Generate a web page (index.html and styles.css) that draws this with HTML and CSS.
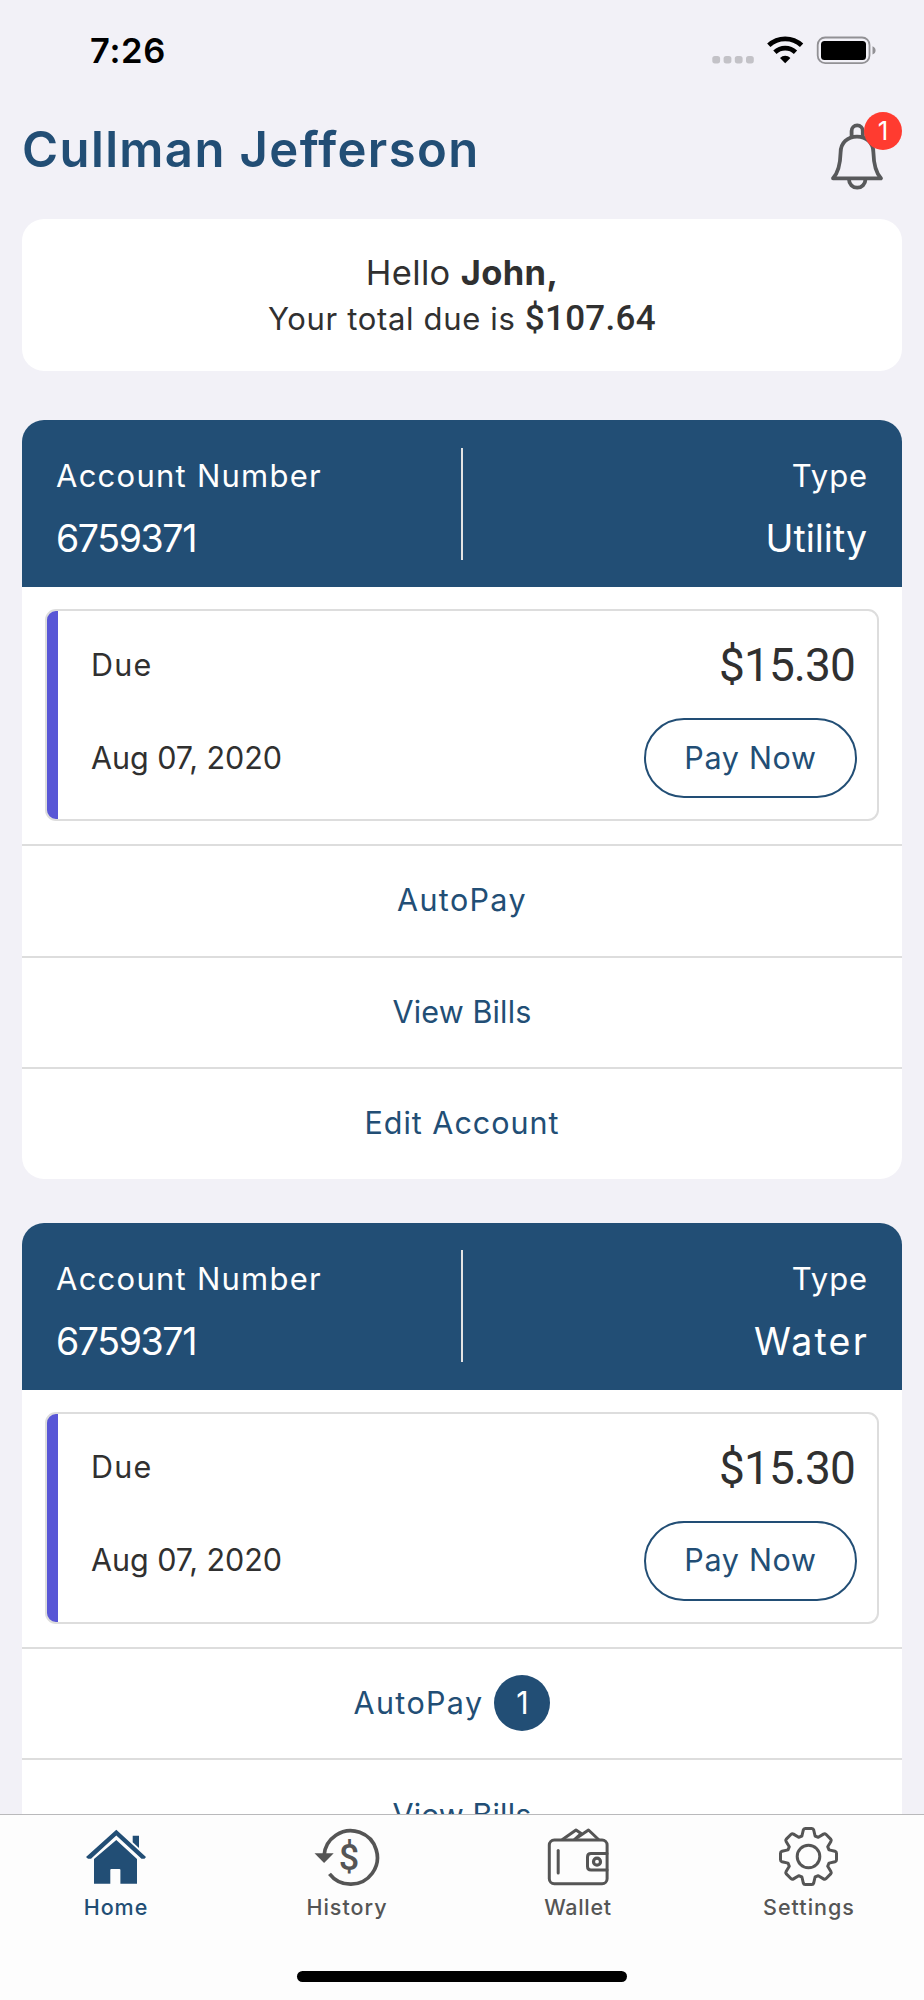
FILE: index.html
```html
<!DOCTYPE html>
<html lang="en">
<head>
<meta charset="utf-8">
<title>Cullman Jefferson</title>
<link rel="stylesheet" href="styles.css">
</head>
<body>
<div class="app">
  <div class="status">
    <span class="time">7:26</span>
    <svg class="status-icons" viewBox="710 30 170 40">
      <g fill="#c3c2c7"><rect x="712.3" y="56" width="7.8" height="7.4" rx="2.6"/><rect x="723.6" y="56" width="7.8" height="7.4" rx="2.6"/><rect x="734.8" y="56" width="7.8" height="7.4" rx="2.6"/><rect x="746" y="56" width="7.8" height="7.4" rx="2.6"/></g>
      <g fill="none" stroke="#000" stroke-width="4.8"><path d="M768.8 45.3A24 24 0 0 1 801.6 45.3"/><path d="M774.9 52.2A15.1 15.1 0 0 1 795.5 52.2"/></g>
      <path d="M785.2 63.2L780 58A7.4 7.4 0 0 1 790.4 58Z"/>
      <rect x="817.7" y="37.5" width="51.8" height="25.6" rx="7.5" fill="none" stroke="#929195" stroke-width="1.8"/>
      <rect x="821" y="41" width="45" height="19" rx="3.5"/>
      <path d="M872.5 46.2C876.6 47.5 876.6 53.2 872.5 54.5Z" fill="#929195"/>
    </svg>
  </div>
  <header class="top">
    <h1 class="brand">Cullman Jefferson</h1>
    <div class="bell">
      <svg class="bell-icon" viewBox="829 120 56 72" fill="none" stroke="#58595b" stroke-width="3.8" stroke-linejoin="round">
        <path d="M833 178.300C838.500 172.500 840.300 164 840.600 152.500C840.700 143 847.500 136.600 857 136.600S873.300 143 873.400 152.500C873.700 164 875.500 172.500 881 178.300Z"/>
        <path d="M851.600 137.500V131A5.600 5.600 0 0 1 862.800 131V137.500"/>
        <path d="M849 179.500A8.200 8.200 0 0 0 865.400 179.500"/>
      </svg>
      <span class="bell-badge">1</span>
    </div>
  </header>
  <main class="content">
    <section class="greeting">
      <p class="hello">Hello <b>John,</b></p>
      <p class="total">Your total due is <b>$107.64</b></p>
    </section>

    <section class="account">
      <div class="account-head">
        <div class="head-col"><span class="label">Account Number</span><span class="value number">6759371</span></div>
        <div class="divider"></div>
        <div class="head-col right"><span class="label type">Type</span><span class="value">Utility</span></div>
      </div>
      <div class="due-wrap">
        <div class="due">
          <div class="due-row"><span class="due-label">Due</span><span class="amount">$15.30</span></div>
          <div class="due-row pay-row"><span class="date">Aug 07, 2020</span><button class="pay">Pay Now</button></div>
        </div>
      </div>
      <a class="action"><span class="autopay">AutoPay</span></a>
      <a class="action"><span class="bills">View Bills</span></a>
      <a class="action"><span class="edit">Edit Account</span></a>
    </section>

    <section class="account">
      <div class="account-head">
        <div class="head-col"><span class="label">Account Number</span><span class="value number">6759371</span></div>
        <div class="divider"></div>
        <div class="head-col right"><span class="label type">Type</span><span class="value water">Water</span></div>
      </div>
      <div class="due-wrap">
        <div class="due">
          <div class="due-row"><span class="due-label">Due</span><span class="amount">$15.30</span></div>
          <div class="due-row pay-row"><span class="date">Aug 07, 2020</span><button class="pay">Pay Now</button></div>
        </div>
      </div>
      <a class="action with-count"><span class="autopay">AutoPay</span><span class="count">1</span></a>
      <a class="action"><span class="bills">View Bills</span></a>
    </section>
  </main>
  <nav class="tabs">
    <div class="tab-list">
      <a class="tab active">
        <svg class="tab-icon" viewBox="81 1826 70 62" fill="currentColor">
          <path d="M116.300 1829.800L146 1857L144.500 1858.700H141.500L116.300 1835.600L91 1858.700H88L86 1857Z"/>
          <path d="M132.700 1835.800H139V1848L132.700 1842.300Z"/>
          <path d="M116.300 1840L137 1859V1883.800H120.400V1870Q120.400 1869 119.400 1869H111.300Q110.300 1869 110.300 1870V1883.800H94V1859Z"/>
        </svg>
        <span class="tab-label">Home</span>
      </a>
      <a class="tab">
        <svg class="tab-icon" viewBox="312 1826 70 62">
          <path d="M324 1856A26.700 26.700 0 1 1 329.500 1873.800" fill="none" stroke="#555" stroke-width="3.700"/>
          <path d="M314.500 1853.300H333.700L324.100 1863Z" fill="#555"/>
          <text class="dollar" x="349" y="1869.500" text-anchor="middle">$</text>
        </svg>
        <span class="tab-label">History</span>
      </a>
      <a class="tab">
        <svg class="tab-icon" viewBox="543 1826 70 62" fill="none" stroke="#555" stroke-width="3" stroke-linejoin="round" stroke-linecap="round">
          <rect x="549.300" y="1840" width="57.800" height="43.700" rx="5"/>
          <path d="M558.200 1850.500V1873"/>
          <path d="M607 1853.500H591Q587.500 1853.500 587.500 1857V1866.500Q587.500 1870 591 1870H607"/>
          <circle cx="597" cy="1861.700" r="3.500" stroke-width="3.200"/>
          <path d="M562.500 1839.500L576 1830L581.500 1833.700M574.500 1839.500L588.500 1830L598.500 1839.500M575 1839L580 1834.500"/>
        </svg>
        <span class="tab-label wallet">Wallet</span>
      </a>
      <a class="tab">
        <svg class="tab-icon" viewBox="-34.500 -30.500 70 62" fill="none" stroke="#555" stroke-width="3" stroke-linejoin="round">
          <path d="M-6.600 -20.500L-5.200 -26.500Q-4.800 -28 -3.300 -28H3.300Q4.800 -28 5.200 -26.500L6.600 -20.500L9.800 -19.200L15 -22.400Q16.300 -23.200 17.400 -22.200L22.200 -17.400Q23.200 -16.300 22.400 -15L19.200 -9.800L20.500 -6.600L26.500 -5.200Q28 -4.800 28 -3.300V3.300Q28 4.800 26.500 5.200L20.500 6.600L19.200 9.800L22.400 15Q23.200 16.300 22.200 17.400L17.400 22.200Q16.300 23.200 15 22.400L9.800 19.200L6.600 20.500L5.200 26.500Q4.800 28 3.300 28H-3.300Q-4.800 28 -5.200 26.500L-6.600 20.500L-9.800 19.200L-15 22.400Q-16.300 23.200 -17.400 22.200L-22.200 17.400Q-23.200 16.300 -22.400 15L-19.200 9.800L-20.500 6.600L-26.500 5.200Q-28 4.800 -28 3.300V-3.300Q-28 -4.800 -26.500 -5.200L-20.500 -6.600L-19.200 -9.800L-22.400 -15Q-23.200 -16.300 -22.200 -17.400L-17.400 -22.200Q-16.300 -23.200 -15 -22.400L-9.800 -19.200Z"/>
          <circle r="11.300"/>
        </svg>
        <span class="tab-label">Settings</span>
      </a>
    </div>
    <div class="home-indicator"></div>
  </nav>
</div>
</body>
</html>
```
FILE: styles.css
```css
* { box-sizing: border-box; }
body { margin: 0; background: #f2f1f7; font-family: Inter, "Open Sans", sans-serif; color: #303030; }
h1, p { margin: 0; }
.app { width: 924px; height: 2000px; display: flex; flex-direction: column; overflow: hidden; }

.status { height: 101px; flex: none; display: flex; justify-content: space-between; padding: 30px 44px 0 90px; }
.time { font-size: 34.500px; font-weight: 600; line-height: 41px; color: #000; letter-spacing: 0.700px; }
.status-icons { width: 170px; height: 40px; }

.top { height: 118px; flex: none; display: flex; justify-content: space-between; padding: 19px 22px 0 22px; }
.brand { font-size: 49px; line-height: 60px; font-weight: 600; color: #224e75; letter-spacing: 1.400px; white-space: nowrap; }
.bell { position: relative; width: 73px; height: 72px; }
.bell-icon { width: 56px; height: 72px; display: block; }
.bell-badge { position: absolute; right: 0; top: -8px; width: 38px; height: 38px; border-radius: 50%; background: #ff3b30; color: #fff; font-size: 26px; line-height: 38px; text-align: center; }

.content { flex: 1; min-height: 0; overflow: hidden; padding: 0 22px; }
.greeting { height: 152px; background: #fff; border-radius: 22px; padding-top: 31px; text-align: center; margin-bottom: 49px; white-space: nowrap; }
.hello { font-size: 34.500px; line-height: 46px; letter-spacing: 0.350px; }
.total { font-size: 31px; line-height: 46px; letter-spacing: 0.650px; }
.total b { font-family: Roboto, sans-serif; font-size: 35px; font-weight: 500; letter-spacing: 0.300px; }

.account { background: #fff; border-radius: 22px; overflow: hidden; margin-bottom: 44px; }
.account-head { height: 167px; background: #224e75; color: #fff; display: flex; align-items: center; padding: 0 35px 0 34px; }
.head-col { flex: 1; display: flex; flex-direction: column; gap: 13px; padding-top: 8px; }
.right { align-items: flex-end; }
.divider { width: 2px; height: 112px; background: #e4e4e4; }
.label { font-size: 31px; line-height: 50px; white-space: nowrap; letter-spacing: 1.250px; }
.type { letter-spacing: 0.900px; margin-right: -1px; }
.value { font-size: 37.500px; line-height: 50px; }
.number { letter-spacing: -1.400px; }
.water { letter-spacing: 2.200px; margin-right: -2px; }

.due-wrap { padding: 22px 23px 23px; }
.due { height: 212px; border: 2px solid #ddd; border-radius: 11px; padding: 24px 20px 0 44px; background: linear-gradient(90deg, #5856d6 11px, #fff 11px); }
.due-row { display: flex; justify-content: space-between; align-items: center; height: 60px; font-size: 30.500px; }
.due-label { letter-spacing: 1.200px; padding-bottom: 2px; }
.date { letter-spacing: -0.050px; padding-bottom: 2px; }
.pay-row { height: 80px; margin-top: 23px; }
.amount { font-family: Roboto, sans-serif; font-size: 46px; letter-spacing: -0.900px; padding-right: 2px; }
.pay { width: 213px; height: 80px; border: 2px solid #224e75; border-radius: 40px; background: #fff; color: #224e75; font: 400 30.500px Inter, sans-serif; letter-spacing: 0.700px; padding: 0 0 2px; white-space: nowrap; }

.action { height: 111.600px; border-top: 2px solid #ddd; padding-bottom: 2px; display: flex; align-items: center; justify-content: center; color: #224e75; font-size: 30.500px; }
.autopay { letter-spacing: 1.350px; }
.bills { letter-spacing: 0.150px; }
.edit { letter-spacing: 1px; }
.with-count { gap: 11px; padding-right: 20px; }
.count { width: 56px; height: 56px; border-radius: 50%; background: #224e75; color: #fff; text-align: center; line-height: 56px; }

.tabs { height: 186px; flex: none; border-top: 1px solid #b9b9bb; background: #fdfdfd; display: flex; flex-direction: column; align-items: center; justify-content: space-between; padding: 11px 0 18px; }
.tab-list { width: 100%; display: grid; grid-template-columns: repeat(4, 1fr); }
.tab { display: flex; flex-direction: column; align-items: center; color: #555; }
.tab.active { color: #224e75; }
.tab-icon { width: 70px; height: 62px; }
.tab-label { font-size: 21.500px; font-weight: 450; line-height: 38px; letter-spacing: 1px; padding-left: 1px; }
.wallet { letter-spacing: 0.700px; }
.dollar { font-family: Roboto, sans-serif; font-size: 36px; font-weight: 500; fill: #555; stroke: none; }
.home-indicator { width: 330px; height: 11px; border-radius: 6px; background: #000; }
```
